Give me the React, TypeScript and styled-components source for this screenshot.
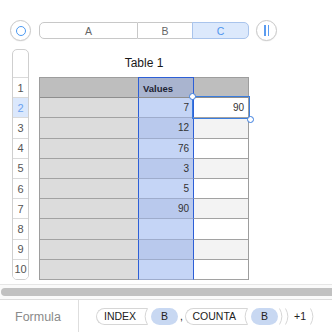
import React from 'react';
import styled, { createGlobalStyle } from 'styled-components';

const GlobalStyle = createGlobalStyle`
  html, body {
    margin: 0;
    padding: 0;
    background: #fff;
  }
  body {
    font-family: 'Liberation Sans', Arial, sans-serif;
  }
`;

const Page = styled.div`
  width: 332px;
  height: 332px;
  overflow: hidden;
  display: flex;
  flex-direction: column;
  background: #fff;
`;

const TopBar = styled.div`
  display: flex;
  align-items: center;
  padding: 20px 0 8px 10px;
`;

const RoundButton = styled.div`
  width: 21px;
  height: 21px;
  box-sizing: border-box;
  border: 1px solid #c9c9c9;
  border-radius: 50%;
  background: #fff;
  box-shadow: 0 0.5px 1px rgba(0, 0, 0, 0.08);
  display: flex;
  align-items: center;
  justify-content: center;
  gap: 2px;
`;

const Ring = styled.span`
  width: 10px;
  height: 10px;
  box-sizing: border-box;
  border: 1.7px solid #4c9af2;
  border-radius: 50%;
`;

const PauseBar = styled.span`
  width: 1.4px;
  height: 11px;
  background: #5b9cf0;
`;

const Segmented = styled.div`
  display: grid;
  grid-template-columns: 99px 55px 56px;
  height: 17px;
  margin: 0 7px 0 8px;
`;

const Segment = styled.div<{ $first?: boolean; $active?: boolean }>`
  box-sizing: border-box;
  display: flex;
  align-items: center;
  justify-content: center;
  font-size: 10.5px;
  color: ${(p) => (p.$active ? '#4f95ee' : '#666')};
  background: ${(p) => (p.$active ? '#dce9fc' : '#fff')};
  border: 1px solid ${(p) => (p.$active ? '#a9c4ec' : '#c8c8c8')};
  border-left: ${(p) => (p.$first || p.$active ? undefined : 'none')};
  margin-left: ${(p) => (p.$active ? '-1px' : '0')};
  border-radius: ${(p) => (p.$first ? '5px 0 0 5px' : p.$active ? '0 5px 5px 0' : '0')};
`;

const Sheet = styled.div`
  height: 235px;
  box-sizing: border-box;
  display: flex;
  align-items: flex-start;
  gap: 10px;
  padding-left: 12px;
`;

const RowHeaders = styled.div`
  width: 17px;
  box-sizing: border-box;
  border: 1px solid #cfcfcf;
  border-radius: 5px;
  overflow: hidden;
  display: flex;
  flex-direction: column;
`;

const Corner = styled.div`
  height: 27px;
`;

const RowHead = styled.div<{ $active?: boolean }>`
  height: 20.2px;
  box-sizing: border-box;
  border-top: 1px solid #dadada;
  display: flex;
  align-items: center;
  justify-content: center;
  font-size: 11px;
  color: ${(p) => (p.$active ? '#6aa2ef' : '#555')};
  background: ${(p) => (p.$active ? '#dbe8fc' : '#fff')};
`;

const TableBlock = styled.div`
  width: 210px;
  display: flex;
  flex-direction: column;
`;

const Title = styled.div`
  height: 28px;
  display: flex;
  align-items: center;
  justify-content: center;
  font-size: 12px;
  color: #1a1a1a;
`;

const Table = styled.div`
  display: grid;
  grid-template-columns: 98px 56px 54px;
  grid-auto-rows: 20.2px;
  border: 1px solid #9d9d9d;
  border-bottom: none;
`;

type Col = 'a' | 'b' | 'c';

const cellBg = (col: Col, row: number) => {
  if (row === 1) return col === 'b' ? '#a9b4cf' : '#bebebe';
  if (col === 'a') return '#dcdcdc';
  if (col === 'b') return row % 2 === 0 ? '#c5d5f6' : '#b9c9ed';
  return row % 2 === 0 ? '#ffffff' : '#f3f3f3';
};

const Cell = styled.div<{ $col: Col; $row: number }>`
  position: relative;
  box-sizing: border-box;
  display: flex;
  align-items: center;
  justify-content: flex-end;
  padding-right: 4px;
  font-size: 10px;
  color: #333;
  background: ${(p) => cellBg(p.$col, p.$row)};
  border-bottom: 1px solid ${(p) => (p.$row === 1 ? '#8e8e8e' : p.$col === 'b' ? '#9eaccc' : '#a2a2a2')};
  ${(p) =>
    p.$col === 'b' &&
    `
    border-left: 1px solid #2d5fd6;
    border-right: 1px solid #2d5fd6;
  `}
`;

const HeaderLabel = styled.span`
  position: absolute;
  left: 4px;
  top: 50%;
  transform: translateY(-50%);
  font-size: 9.5px;
  font-weight: bold;
  color: #1d2333;
`;

const ColumnCap = styled.span`
  position: absolute;
  top: -1px;
  left: -1px;
  right: -1px;
  height: 1px;
  background: #2d5fd6;
`;

const Selection = styled.div`
  position: absolute;
  inset: -2px;
  border: 1.5px solid #3a7ddf;
  z-index: 2;
  pointer-events: none;
`;

const Handle = styled.span<{ $pos: 'tl' | 'br' }>`
  position: absolute;
  width: 7px;
  height: 7px;
  box-sizing: border-box;
  border-radius: 50%;
  background: #fff;
  border: 1.2px solid #3a7ddf;
  ${(p) => (p.$pos === 'tl' ? 'top: -4.5px; left: -4.5px;' : 'bottom: -4.5px; right: -4.5px;')}
`;

const ScrollTrack = styled.div`
  height: 16px;
  box-sizing: border-box;
  border-top: 1px solid #e6e6e6;
  border-bottom: 1px solid #dcdcdc;
  padding: 3px 0 0 1px;
  background: #fafafa;
`;

const Thumb = styled.div`
  width: 360px;
  height: 8px;
  border-radius: 4px;
  background: #c1c1c1;
`;

const FormulaBar = styled.div`
  height: 32px;
  display: flex;
`;

const FormulaLabel = styled.div`
  width: 79px;
  box-sizing: border-box;
  border-right: 1px solid #dedede;
  padding: 2px 0 0 15px;
  display: flex;
  align-items: center;
  font-size: 12.5px;
  color: #8a8a8a;
`;

const Tokens = styled.div`
  display: flex;
  align-items: center;
  padding-left: 17px;
  font-size: 10.5px;
  color: #222;
`;

const FuncName = styled.span<{ $gap?: number }>`
  height: 17px;
  box-sizing: border-box;
  display: flex;
  align-items: center;
  border: 1px solid #d6d6d6;
  border-right: none;
  border-radius: 8.5px 0 0 8.5px;
  padding: 0 6px 0 7px;
  background: #fff;
`;

const Arg = styled.span`
  height: 17px;
  display: flex;
  align-items: center;
  padding: 0 10px;
  margin-left: 3px;
  border-radius: 8.5px;
  background: #c8d8f2;
`;

const Text = styled.span<{ $ml?: number; $mr?: number }>`
  margin-left: ${(p) => p.$ml ?? 0}px;
  margin-right: ${(p) => p.$mr ?? 0}px;
`;

const Paren = styled.svg<{ $ml?: number }>`
  display: block;
  margin-left: ${(p) => p.$ml ?? 0}px;
  flex: none;
`;

const OpenParen = () => (
  <Paren width="6" height="17" viewBox="0 0 6 17">
    <path d="M0 0.5 H5.5 Q0.8 8.5 5.5 16.5 H0" fill="#fff" stroke="#d6d6d6" strokeWidth="1" />
  </Paren>
);

const CloseParen = ({ ml }: { ml?: number }) => (
  <Paren $ml={ml} width="6" height="17" viewBox="0 0 6 17">
    <path d="M0.5 0.5 Q5.2 8.5 0.5 16.5" fill="none" stroke="#d6d6d6" strokeWidth="1" />
  </Paren>
);

const values: Record<number, string> = { 2: '7', 3: '12', 4: '76', 5: '3', 6: '5', 7: '90' };
const rows = Array.from({ length: 10 }, (_, i) => i + 1);

const App: React.FC = () => {
  return (
    <Page>
      <GlobalStyle />
      <TopBar>
        <RoundButton>
          <Ring />
        </RoundButton>
        <Segmented>
          <Segment $first>A</Segment>
          <Segment>B</Segment>
          <Segment $active>C</Segment>
        </Segmented>
        <RoundButton>
          <PauseBar />
          <PauseBar />
        </RoundButton>
      </TopBar>

      <Sheet>
        <RowHeaders>
          <Corner />
          {rows.map((r) => (
            <RowHead key={r} $active={r === 2}>
              {r}
            </RowHead>
          ))}
        </RowHeaders>
        <TableBlock>
          <Title>Table 1</Title>
          <Table>
            {rows.map((r) => (
              <React.Fragment key={r}>
                <Cell $col="a" $row={r} />
                <Cell $col="b" $row={r}>
                  {r === 1 ? (
                    <>
                      <ColumnCap />
                      <HeaderLabel>Values</HeaderLabel>
                    </>
                  ) : (
                    values[r]
                  )}
                </Cell>
                <Cell $col="c" $row={r}>
                  {r === 2 && (
                    <>
                      90
                      <Selection>
                        <Handle $pos="tl" />
                        <Handle $pos="br" />
                      </Selection>
                    </>
                  )}
                </Cell>
              </React.Fragment>
            ))}
          </Table>
        </TableBlock>
      </Sheet>

      <ScrollTrack>
        <Thumb />
      </ScrollTrack>

      <FormulaBar>
        <FormulaLabel>Formula</FormulaLabel>
        <Tokens>
          <FuncName>INDEX</FuncName>
          <OpenParen />
          <Arg>B</Arg>
          <Text $ml={2} $mr={1.5}>,</Text>
          <FuncName>COUNTA</FuncName>
          <OpenParen />
          <Arg>B</Arg>
          <CloseParen ml={1} />
          <CloseParen ml={0} />
          <Text $ml={3}>+1</Text>
          <CloseParen ml={4} />
        </Tokens>
      </FormulaBar>
    </Page>
  );
};

export default App;
